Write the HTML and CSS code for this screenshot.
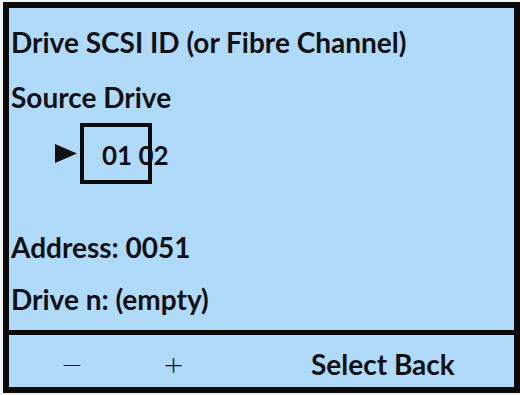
FILE: index.html
```html
<!DOCTYPE html>
<html>
<head>
<meta charset="utf-8">
<link rel="stylesheet" href="styles.css">
</head>
<body>
<div class="frame">
  <div class="content">
    <div class="line l1">Drive SCSI ID (or Fibre Channel)</div>
    <div class="line l2">Source Drive</div>
    <div class="sel">
      <svg class="arrow" width="22" height="19" viewBox="0 0 22 19"><polygon points="0,0 22,9.5 0,19" fill="#111"/></svg>
      <div class="box"><span class="ids">01 02</span></div>
    </div>
    <div class="line l4">Address: 0051</div>
    <div class="line l5">Drive n: (empty)</div>
  </div>
  <div class="bar">
    <span class="key minus">–</span>
    <span class="key plus">+</span>
    <span class="key sb">Select Back</span>
  </div>
</div>
</body>
</html>
```
FILE: styles.css
```css
html, body {
  margin: 0;
  padding: 0;
  background: #f2f2f2;
}
body {
  width: 520px;
  height: 395px;
  overflow: hidden;
  font-family: Lato, "Open Sans", sans-serif;
  font-weight: bold;
  color: #111;
}
.frame {
  box-sizing: border-box;
  width: 517px;
  height: 391px;
  margin: 2px 0 0 3px;
  border: 6px solid #0a0a0a;
  background: #b0dafa;
  display: flex;
  flex-direction: column;
}
.content {
  flex: 1;
  padding-left: 2px;
  border-bottom: 5px solid #0a0a0a;
}
.line {
  font-size: 28px;
  line-height: 42px;
  height: 42px;
  white-space: nowrap;
}
.l1 { margin-top: 13px; }
.l2 { margin-top: 13px; }
.sel {
  display: flex;
  align-items: center;
  margin-top: 5px;
  margin-left: 44px;
  height: 61px;
}
.arrow { display: block; margin-right: 3px; }
.box {
  box-sizing: border-box;
  width: 72px;
  height: 61px;
  border: 4px solid #0a0a0a;
  padding-left: 18px;
  font-size: 26px;
  line-height: 57px;
  white-space: nowrap;
}
.ids { display: inline-block; }
.l4 { margin-top: 42px; }
.l5 { margin-top: 10px; }
.bar {
  flex: none;
  height: 52px;
  box-sizing: border-box;
  padding-top: 6px;
  font-size: 28px;
  line-height: 46px;
  display: flex;
  white-space: nowrap;
}
.key { display: block; }
.minus {
  margin-left: 54px;
  width: 18px;
  text-align: center;
  font-weight: 300;
  transform: scaleX(1.5) translateY(-1px);
}
.plus {
  margin-left: 83px;
  width: 19px;
  text-align: center;
  font-weight: 300;
  font-size: 30px;
  transform: scaleX(1.15);
}
.sb { margin-left: 128px; }
```
